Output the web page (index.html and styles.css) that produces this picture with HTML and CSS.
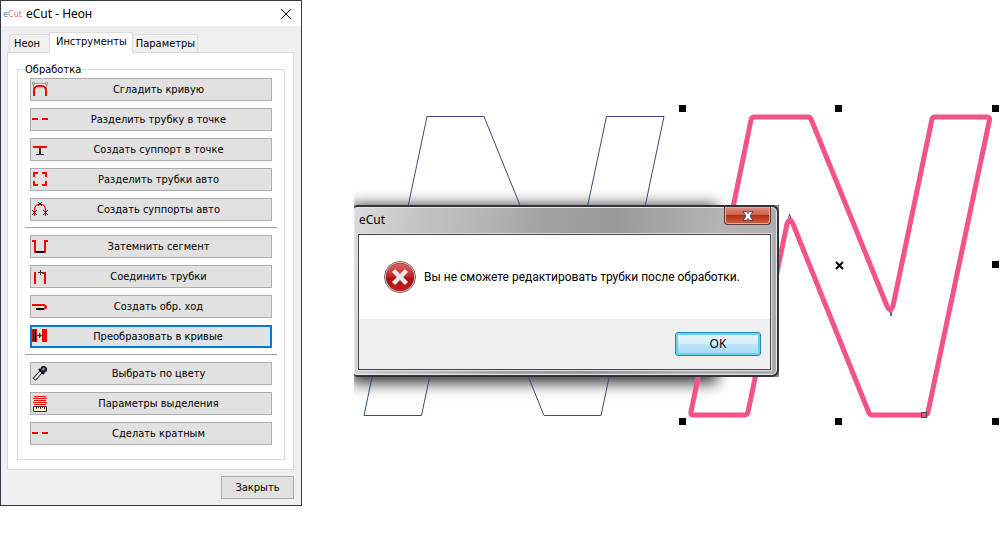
FILE: index.html
```
<!DOCTYPE html>
<html lang="ru">
<head>
<meta charset="utf-8">
<title>eCut - Неон</title>
<link rel="stylesheet" href="styles.css">
</head>
<body>
<main class="desktop">
  <svg class="canvas" width="1000" height="550" viewBox="0 0 1000 550" aria-hidden="true">
    <path class="thin" d="M427 116.500H484L564.500 315L606.500 116.500H664L601 415.500H544L463.500 216L421.500 415.500H364Z"/>
    <path class="thin" d="M788 222L789.500 214L792 222M889 308L891 316L892.500 308"/>
    <path class="tube" d="M755 117H808Q810 117 811 119L887 306Q890 313 893 306L932 119Q932.500 117 935 117H987Q990 117 989.500 120L928 412Q927 415 925 415H872Q870 415 869 413L793 224Q790 216 787 224L748 412Q747 415 745 415H693Q690.500 415 691 412L751 120Q751.500 117 755 117Z"/>
    <path class="handles" d="M679 105h7v7h-7zM835 105h7v7h-7zM992 105h7v7h-7zM992 261h7v7h-7zM679 418h7v7h-7zM835 418h7v7h-7zM992 418h7v7h-7z"/>
    <path class="centre" d="M836 262L843 269M843 262L836 269"/>
    <rect class="node" x="921.500" y="412.500" width="5" height="5"/>
  </svg>

  <section class="tool-window" aria-label="eCut - Неон">
    <header class="tool-title">
      <span class="app-mark"><b>e</b>Cut</span>
      <h1>eCut - Неон</h1>
      <button class="title-close" type="button" aria-label="Закрыть окно"><svg width="12" height="12" viewBox="0 0 12 12"><path d="M1 1L11 11M11 1L1 11" stroke="#111" fill="none"/></svg></button>
    </header>
    <div class="tool-body">
      <nav class="tabs" role="tablist">
        <button class="tab" type="button" role="tab">Неон</button>
        <button class="tab active" type="button" role="tab" aria-selected="true">Инструменты</button>
        <button class="tab" type="button" role="tab">Параметры</button>
      </nav>
      <div class="panel">
        <fieldset class="group">
          <legend>Обработка</legend>
          <div class="actions">
            <button class="btn" type="button"><svg class="icon" viewBox="0 0 16 16"><path d="M3 1.500H13M1.500 3V8M14.500 3V8" stroke="#a0a0a0" fill="none"/><path d="M.5.500h2v2h-2zM13.500.500h2v2h-2z" fill="#eee" stroke="#999"/><path d="M2 14V9Q2 4 6.500 4H9.500Q14 4 14 9V14" fill="none" stroke="red" stroke-width="2"/></svg><span>Сгладить кривую</span></button>
            <button class="btn" type="button"><svg class="icon" viewBox="0 0 16 16"><path d="M0 6h6v2H0zM10 6h6v2h-6z" fill="red"/></svg><span>Разделить трубку в точке</span></button>
            <button class="btn" type="button"><svg class="icon" viewBox="0 0 16 16"><path d="M8 5V13" stroke="#334" stroke-width="2"/><path d="M4 12.500H12" stroke="#334"/><path d="M1 4h14v2H1z" fill="red"/></svg><span>Создать суппорт в точке</span></button>
            <button class="btn" type="button"><svg class="icon" viewBox="0 0 16 16"><path d="M6 1H2V5M10 1H14V5M2 9V13H6M10 13H14V9" stroke="red" stroke-width="2" fill="none"/></svg><span>Разделить трубки авто</span></button>
            <button class="btn" type="button"><svg class="icon" viewBox="0 0 16 16"><path d="M2.500 14V7.500Q3 2.500 7 2.500H9Q13 2.500 13.500 7.500V14" stroke="red" stroke-width="1.200" fill="none"/><path d="M6 0L10 4M10 0L6 4M0 8L5 13M5 8L0 13M11 8L16 13M16 8L11 13" stroke="#111"/></svg><span>Создать суппорты авто</span></button>
            <hr>
            <button class="btn" type="button"><svg class="icon" viewBox="0 0 16 16"><path d="M0 2H3V14M16 2H13V14" stroke="red" stroke-width="2" fill="none"/><path d="M4 12h8v2H4z"/></svg><span>Затемнить сегмент</span></button>
            <button class="btn" type="button"><svg class="icon" viewBox="0 0 16 16"><path d="M3 3V15M10 4H13V15" stroke="red" stroke-width="2" fill="none"/><path d="M6 3.500H11M8.500 1V6" stroke="#334"/></svg><span>Соединить трубки</span></button>
            <button class="btn" type="button"><svg class="icon" viewBox="0 0 16 16"><path d="M0 6H12L14 7.500V8.500L12 10" stroke="red" stroke-width="2" fill="none"/><path d="M4 9h8v2H4z"/></svg><span>Создать обр. ход</span></button>
            <button class="btn focused" type="button"><svg class="icon" viewBox="0 0 16 16"><path d="M0 0h5v13H0zM10 0h5v13h-5z" fill="red"/><path d="M1 1h3v11H1z"/><path d="M2.500 1V12" stroke="#444"/><path d="M5 6.500H9M7.500 4V9" stroke="#334"/><path d="M7 4L10 6.500L7 9z" fill="#334"/></svg><span>Преобразовать в кривые</span></button>
            <hr>
            <button class="btn" type="button"><svg class="icon" viewBox="0 0 16 16"><path d="M2 13.500L9 6" stroke="#111" stroke-width="4"/><path d="M2.500 13L9 6" stroke="#eee" stroke-width="2"/><path d="M7 3L12 8" stroke="#001" stroke-width="2"/><path d="M8 3L10 0H13L15 2V5L12 7z" fill="#223"/><path d="M10 3L12 1.500L13 3L11 5z" fill="#99a"/></svg><span>Выбрать по цвету</span></button>
            <button class="btn" type="button"><svg class="icon" viewBox="0 0 16 16"><path d="M2 .500H14M1 2.500H15M2 4.500H14M1 6.500H15M2 8.500H14" stroke="red"/><path d="M1.500 10.500h13v5h-13z" fill="#fff0c0" stroke="#333"/><path d="M4.500 11V13M6.500 11V12M8.500 11V13M10.500 11V12M12.500 11V13" stroke="#333"/></svg><span>Параметры выделения</span></button>
            <button class="btn" type="button"><svg class="icon" viewBox="0 0 16 16"><path d="M0 6h6v2H0zM10 6h6v2h-6z" fill="red"/></svg><span>Сделать кратным</span></button>
          </div>
        </fieldset>
      </div>
      <footer class="tool-footer"><button class="btn close" type="button">Закрыть</button></footer>
    </div>
  </section>

  <div class="alert-wrap">
    <section class="alert" role="alertdialog" aria-labelledby="alert-title" aria-describedby="alert-text">
      <header class="alert-title">
        <h2 id="alert-title">eCut</h2>
        <button class="alert-close" type="button" aria-label="Закрыть сообщение"><svg width="12" height="10" viewBox="0 0 12 10"><path d="M1 .5H4.500L6 2.500L7.500 .5H11L8 5L11 9.500H7.500L6 7.500L4.500 9.500H1L4 5Z" fill="#fff" stroke="#4c4558"/></svg></button>
      </header>
      <div class="alert-box">
        <div class="alert-content">
          <svg width="34" height="34" viewBox="0 0 34 34" aria-hidden="true">
            <defs><linearGradient id="err" x1="0" y1="0" x2="0" y2="1"><stop offset="0" stop-color="#dc6864"/><stop offset=".5" stop-color="#c32423"/><stop offset=".55" stop-color="#a80b0e"/><stop offset="1" stop-color="#c91d1e"/></linearGradient></defs>
            <circle cx="17" cy="17" r="15.500" fill="#e4dcda" stroke="#77706f"/>
            <circle cx="17" cy="17" r="14" fill="url(#err)" stroke="#8f1a1a" stroke-width=".5"/>
            <path d="M10.500 10.500L23.500 23.500M23.500 10.500L10.500 23.500" stroke="#e8e8ea" stroke-width="4.500"/>
          </svg>
          <p id="alert-text">Вы не сможете редактировать трубки после обработки.</p>
        </div>
        <footer class="alert-footer"><button class="ok" type="button">OK</button></footer>
      </div>
    </section>
  </div>
</main>
</body>
</html>
```
FILE: styles.css
```
* { box-sizing: border-box; }
body { margin: 0; background: #fff; }
button { font: inherit; color: inherit; padding: 0; margin: 0; border-radius: 0; }
h1, h2, p { margin: 0; font-weight: 400; }

.desktop {
  position: relative;
  isolation: isolate;
  min-height: 550px;
  font: 11px/14px "DejaVu Sans Condensed", "DejaVu Sans", sans-serif;
  color: #000;
  overflow: hidden;
}
.canvas { position: absolute; left: 0; top: 0; }
.thin { fill: none; stroke: #3c4a7c; }
.tube { fill: none; stroke: #f4528a; stroke-width: 5; stroke-linejoin: round; }
.centre { stroke: #000; stroke-width: 2; }
.node { fill: none; stroke: #444; }

/* Tool window */
.tool-window {
  position: absolute;
  left: 0;
  top: 0;
  width: 302px;
  border: 1px solid #333945;
  background: #efefef;
}
.tool-title {
  display: flex;
  align-items: center;
  height: 25px;
  padding: 0 7px 0 2px;
  gap: 4px;
  background: #fff;
}
.tool-title h1 { flex: 1; font: 12px/16px "Noto Sans", sans-serif; }
.app-mark { font-size: 9px; line-height: 12px; color: #f07474; }
.app-mark b { font-weight: 400; color: #1698e0; }
.title-close { display: flex; padding: 2px; border: 0; background: none; }
.tool-body { padding: 6px 7px 6px 6px; }
.tabs { display: flex; align-items: flex-end; padding-left: 2px; }
.tab {
  height: 18px;
  padding: 0 2px 0 3px;
  border: 1px solid #dcdcdc;
  border-bottom: 0;
  background: #f0f0f0;
}
.tab:first-child { width: 40px; padding-left: 4px; border-right: 0; text-align: left; }
.tab:last-child { border-left: 0; }
.tab.active {
  height: 21px;
  padding: 0 5px 2px 6px;
  margin-bottom: -1px;
  background: #fff;
}
.panel { padding: 9px 8px 9px 9px; border: 1px solid #dcdcdc; background: #fff; }
.group { min-width: 0; margin: 0; padding: 0 7px 14px; border: 1px solid #dcdcdc; }
.group legend { padding: 0; line-height: 15px; }
.actions { display: flex; flex-direction: column; gap: 7px; margin-top: 1px; }
.actions .btn { margin: 0 5px; }
.btn {
  display: flex;
  align-items: center;
  height: 23px;
  padding: 0 2px 0 1px;
  border: 1px solid #adadad;
  background: #e1e1e1;
}
.btn span { flex: 1; text-align: center; }
.icon { width: 16px; height: 16px; }
.btn.focused { border: 2px solid #0078d7; padding-left: 0; }
.actions hr { width: 100%; height: 1px; margin: -1px 0 0; border: 0; background: #a0a0a0; }
.tool-footer { display: flex; justify-content: flex-end; padding-top: 6px; }
.btn.close { justify-content: center; width: 73px; padding: 0; }

/* Message box */
.alert-wrap {
  position: absolute;
  left: 354px;
  top: 205px;
  width: 425px;
  background: #8a8a8a;
}
.alert-wrap::before {
  content: "";
  position: absolute;
  z-index: -1;
  left: 0;
  top: 0;
  width: 360px;
  height: 100%;
  box-shadow: 0 3px 14px 3px rgba(0, 0, 0, .8);
  clip-path: inset(-30px -30px -30px 0);
}
.alert {
  padding: 0 6px 5px 4px;
  border: 2px solid #30343a;
  border-left: 0;
  border-radius: 4px 7px 7px 4px;
  box-shadow: inset 0 0 0 1px #e8e8e8;
  background: linear-gradient(100deg, #dcdcdc 0, #c4c4c4 14%, #b4b4b4 30%, #a2a2a2 42%, #999 58%, #a4a4a4 68%, #b4b4b4 82%, #aaa 100%);
  font: 12px/16px "Noto Sans", sans-serif;
}
.alert-title { display: flex; align-items: flex-start; justify-content: space-between; height: 27px; padding-left: 1px; }
.alert-title h2 { padding-top: 5px; font: inherit; }
.alert-close {
  display: flex;
  align-items: center;
  justify-content: center;
  width: 47px;
  height: 18px;
  border: 1px solid #653330;
  border-top: 0;
  border-radius: 0 0 4px 4px;
  box-shadow: inset 0 0 0 1px #eba99d;
  background: linear-gradient(#dc9286 0, #cc5945 48%, #b52e16 50%, #d4603f 100%);
}
.alert-box { border: 1px solid #45484b; outline: 1px solid #ddd; background: #fff; }
.alert-content { display: flex; align-items: center; gap: 7px; height: 84px; padding-left: 24px; }
.alert-content p { font-family: Roboto, "Noto Sans", sans-serif; }
.alert-footer { display: flex; justify-content: flex-end; padding: 13px 9px; background: #efefef; }
.ok {
  width: 86px;
  height: 24px;
  border: 1px solid #2c87b3;
  border-radius: 3px;
  box-shadow: inset 0 0 0 2px #5fd4f8;
  background: linear-gradient(#e8f6fd 0, #d5effc 48%, #bbe4fb 50%, #a9dcf7 100%);
}
```
